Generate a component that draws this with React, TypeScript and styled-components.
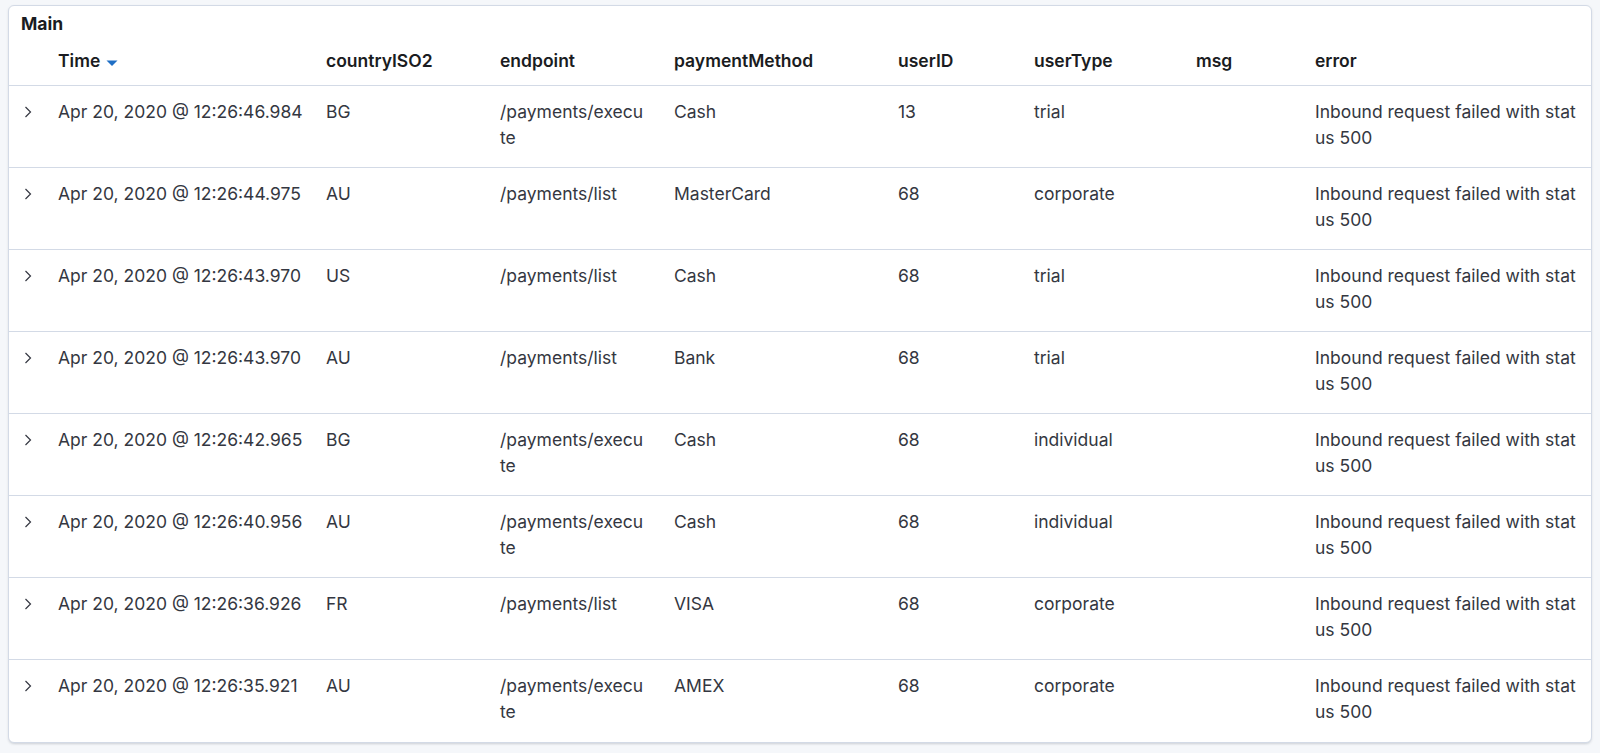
import React from "react";
import styled, { createGlobalStyle } from "styled-components";

const GlobalStyle = createGlobalStyle`
  html, body {
    margin: 0;
    padding: 0;
    background: #f5f7fa;
  }
  body {
    font-family: Inter, "Noto Sans", "Liberation Sans", sans-serif;
    -webkit-font-smoothing: antialiased;
  }
`;

const Page = styled.div`
  padding: 5px 8px 10px 8px;
`;

const Panel = styled.section`
  background: #ffffff;
  border: 1px solid #d3dae6;
  border-radius: 6px;
  box-shadow: 0 1px 3px rgba(0, 0, 0, 0.08), 0 2px 2px -1px rgba(152, 162, 179, 0.25);
  overflow: hidden;
`;

const Title = styled.h2`
  margin: 0;
  padding: 7px 12px 0 12px;
  height: 29px;
  box-sizing: border-box;
  font-size: 17.5px;
  line-height: 22px;
  font-weight: 700;
  color: #1a1c21;
`;

const COLS = "49px 268px 174px 174px 224px 136px 162px 119px 1fr";

const HeaderRow = styled.div`
  display: grid;
  grid-template-columns: ${COLS};
  border-bottom: 1px solid #d3dae6;
`;

const HeadCell = styled.div`
  display: flex;
  align-items: center;
  gap: 6px;
  padding: 14px 8px 12px 0;
  font-size: 17.5px;
  line-height: 24px;
  font-weight: 600;
  color: #1a1c21;
  white-space: nowrap;
`;

const Row = styled.div<{ $last?: boolean }>`
  display: grid;
  grid-template-columns: ${COLS};
  border-bottom: ${(p) => (p.$last ? "none" : "1px solid #d3dae6")};
  height: ${(p) => (p.$last ? "82px" : "81px")};
  box-sizing: content-box;
`;

const Cell = styled.div<{ $pr?: number }>`
  padding: 13px ${(p) => p.$pr ?? 8}px 0 0;
  font-size: 17.5px;
  line-height: 25.6px;
  color: #343741;
  word-break: break-all;
  overflow-wrap: anywhere;
`;

const ToggleCell = styled.div`
  display: flex;
  justify-content: flex-start;
  padding: 20px 0 0 14px;
`;

const SortCaret = () => (
  <svg width="12" height="7" viewBox="0 0 12 7" style={{ marginTop: 4 }}>
    <path d="M0.5 0.5 L11.5 0.5 L6 6 Z" fill="#1f6fc5" />
  </svg>
);

const Chevron = () => (
  <svg width="10" height="12" viewBox="0 0 10 12">
    <path d="M2.5 1 L7.5 6 L2.5 11" fill="none" stroke="#343741" strokeWidth="1.2" strokeLinejoin="miter" />
  </svg>
);

type Doc = {
  time: string;
  country: string;
  endpoint: string;
  method: string;
  userID: string;
  userType: string;
};

const docs: Doc[] = [
  { time: "Apr 20, 2020 @ 12:26:46.984", country: "BG", endpoint: "/payments/execute", method: "Cash", userID: "13", userType: "trial" },
  { time: "Apr 20, 2020 @ 12:26:44.975", country: "AU", endpoint: "/payments/list", method: "MasterCard", userID: "68", userType: "corporate" },
  { time: "Apr 20, 2020 @ 12:26:43.970", country: "US", endpoint: "/payments/list", method: "Cash", userID: "68", userType: "trial" },
  { time: "Apr 20, 2020 @ 12:26:43.970", country: "AU", endpoint: "/payments/list", method: "Bank", userID: "68", userType: "trial" },
  { time: "Apr 20, 2020 @ 12:26:42.965", country: "BG", endpoint: "/payments/execute", method: "Cash", userID: "68", userType: "individual" },
  { time: "Apr 20, 2020 @ 12:26:40.956", country: "AU", endpoint: "/payments/execute", method: "Cash", userID: "68", userType: "individual" },
  { time: "Apr 20, 2020 @ 12:26:36.926", country: "FR", endpoint: "/payments/list", method: "VISA", userID: "68", userType: "corporate" },
  { time: "Apr 20, 2020 @ 12:26:35.921", country: "AU", endpoint: "/payments/execute", method: "AMEX", userID: "68", userType: "corporate" },
];

export default function App() {
  return (
    <>
      <GlobalStyle />
      <Page>
        <Panel>
          <Title>Main</Title>
          <HeaderRow>
            <HeadCell />
            <HeadCell>
              Time <SortCaret />
            </HeadCell>
            <HeadCell>countryISO2</HeadCell>
            <HeadCell>endpoint</HeadCell>
            <HeadCell>paymentMethod</HeadCell>
            <HeadCell>userID</HeadCell>
            <HeadCell>userType</HeadCell>
            <HeadCell>msg</HeadCell>
            <HeadCell>error</HeadCell>
          </HeaderRow>
          {docs.map((d, i) => (
            <Row key={i} $last={i === docs.length - 1}>
              <ToggleCell>
                <Chevron />
              </ToggleCell>
              <Cell>{d.time}</Cell>
              <Cell>{d.country}</Cell>
              <Cell $pr={26}>{d.endpoint}</Cell>
              <Cell>{d.method}</Cell>
              <Cell>{d.userID}</Cell>
              <Cell>{d.userType}</Cell>
              <Cell></Cell>
              <Cell $pr={8}>Inbound request failed with status 500</Cell>
            </Row>
          ))}
        </Panel>
      </Page>
    </>
  );
}
